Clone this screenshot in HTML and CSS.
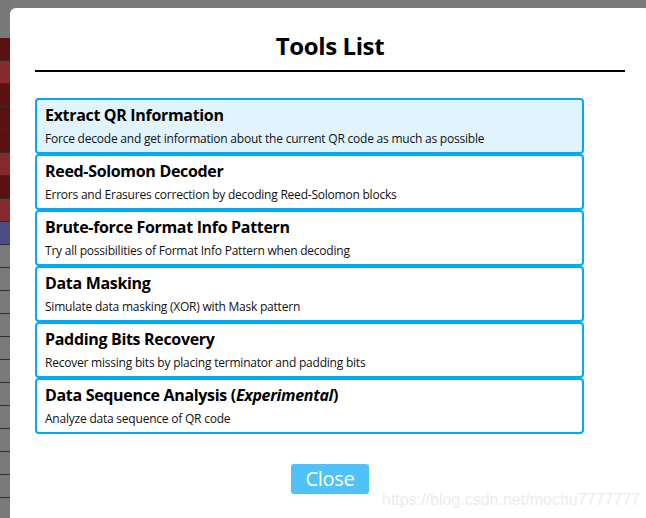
FILE: index.html
```html
<!DOCTYPE html>
<html lang="en">
<head>
<meta charset="utf-8">
<title>Tools List</title>
<link rel="stylesheet" href="styles.css">
</head>
<body>
<div class="page">
  <div class="page-top"></div>
  <ul class="rows">
    <li class="row dark"></li>
    <li class="row light"></li>
    <li class="row dark"></li>
    <li class="row dark"></li>
    <li class="row dark"></li>
    <li class="row light"></li>
    <li class="row dark"></li>
    <li class="row light"></li>
    <li class="row blue"></li>
    <li class="row"></li>
    <li class="row"></li>
    <li class="row"></li>
    <li class="row"></li>
    <li class="row"></li>
    <li class="row"></li>
    <li class="row"></li>
    <li class="row"></li>
    <li class="row"></li>
    <li class="row"></li>
    <li class="row"></li>
    <li class="row"></li>
    <li class="row"></li>
  </ul>
</div>

<div class="modal">
  <h1 class="modal-title">Tools List</h1>
  <div class="rule"></div>
  <div class="tools">
    <div class="tool active">
      <div class="tool-name">Extract QR Information</div>
      <div class="tool-desc">Force decode and get information about the current QR code as much as possible</div>
    </div>
    <div class="tool">
      <div class="tool-name">Reed-Solomon Decoder</div>
      <div class="tool-desc">Errors and Erasures correction by decoding Reed-Solomon blocks</div>
    </div>
    <div class="tool">
      <div class="tool-name">Brute-force Format Info Pattern</div>
      <div class="tool-desc">Try all possibilities of Format Info Pattern when decoding</div>
    </div>
    <div class="tool">
      <div class="tool-name">Data Masking</div>
      <div class="tool-desc">Simulate data masking (XOR) with Mask pattern</div>
    </div>
    <div class="tool">
      <div class="tool-name">Padding Bits Recovery</div>
      <div class="tool-desc">Recover missing bits by placing terminator and padding bits</div>
    </div>
    <div class="tool">
      <div class="tool-name">Data Sequence Analysis (<em>Experimental</em>)</div>
      <div class="tool-desc">Analyze data sequence of QR code</div>
    </div>
  </div>
  <div class="actions">
    <button class="close-btn" type="button">Close</button>
  </div>
</div>

<div class="watermark">https://blog.csdn.net/mochu7777777</div>
</body>
</html>
```

FILE: styles.css
```css
html, body {
  margin: 0;
  padding: 0;
  height: 100%;
  overflow: hidden;
}

body {
  background: #7a7a7a;
  font-family: "Open Sans", "Noto Sans", sans-serif;
  position: relative;
}

.page {
  width: 10px;
}

.page-top {
  height: 38px;
  background: #787878;
}

.rows {
  list-style: none;
  margin: 0;
  padding: 0;
}

.row {
  height: 22px;
  border-bottom: 1px solid #2e2e2e;
  background: #7a7a7a;
}

.row.dark { background: #5b1011; }
.row.light { background: #872a2b; }
.row.blue { background: #4a4e85; }

.modal {
  position: absolute;
  left: 10px;
  top: 8px;
  width: 590px;
  height: 540px;
  padding: 0 25px;
  background: #ffffff;
  border-radius: 6px;
}

.modal-title {
  margin: 0;
  padding-top: 22px;
  height: 40px;
  font-size: 24px;
  line-height: 32px;
  font-weight: 700;
  letter-spacing: -0.4px;
  text-align: center;
  color: #000;
}

.rule {
  height: 2px;
  background: #000;
}

.tools {
  margin-top: 26px;
  width: 549px;
  display: flex;
  flex-direction: column;
}

.tool {
  height: 52px;
  border: 2px solid #03a9f4;
  border-radius: 4px;
  padding: 0 8px;
  background: #ffffff;
  display: flex;
  flex-direction: column;
}

.tool.active {
  background: #e1f4fd;
}

.tool-name {
  font-size: 16px;
  font-weight: 700;
  line-height: 22px;
  padding-top: 4px;
  letter-spacing: -0.32px;
  color: #000;
}

.tool-name em {
  font-style: italic;
}

.tool-desc {
  margin-top: 4px;
  font-size: 12px;
  line-height: 17px;
  letter-spacing: -0.22px;
  color: #111;
}

.actions {
  display: flex;
  justify-content: center;
  margin-top: 30px;
}

.close-btn {
  width: 78px;
  height: 30px;
  border: none;
  border-radius: 3px;
  background: #4fc3f7;
  color: #ffffff;
  font-family: "Open Sans", "Noto Sans", sans-serif;
  font-size: 20px;
  line-height: 30px;
  letter-spacing: -0.3px;
  padding: 0;
}

.watermark {
  position: absolute;
  left: 382px;
  top: 491px;
  font-family: "Liberation Sans", Arial, sans-serif;
  font-size: 16px;
  line-height: 18px;
  color: #ececec;
}
```
